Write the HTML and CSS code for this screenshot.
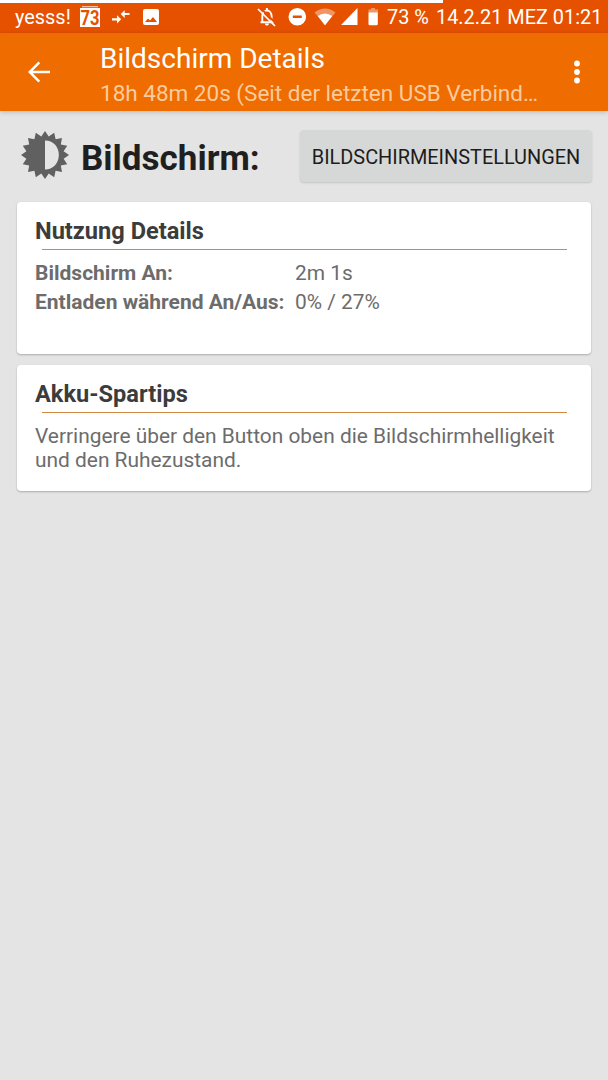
FILE: index.html
```html
<!DOCTYPE html>
<html lang="de">
  <head>
    <meta charset="UTF-8">
    <meta name="viewport" content="width=device-width,initial-scale=1">
    <link rel="stylesheet" href="styles.css">
    <title>Bildschirm Details</title>
  </head>
  <body>
    <div class="progress"></div>
    <div class="status-bar">
      <span class="carrier">yesss!</span>
      <svg class="status-left" width="90" height="30" viewBox="76 3 90 30" fill="#fff">
        <path d="M82 6h16v1.300H82z" opacity=".65"/>
        <path d="M80 8h20v19H80z"/>
        <text class="badge-text" x="90" y="24.500" text-anchor="middle" textLength="19" lengthAdjust="spacingAndGlyphs">73</text>
        <path d="M112 18.200h5v-3l4.200 4.100-4.200 4.100v-3h-5zM129.500 13h-4.800v-2.800L120.700 14l4 3.900V15h4.800z"/>
        <path fill-rule="evenodd" d="M145 9h12q2 0 2 2v12q0 2-2 2h-12q-2 0-2-2V11q0-2 2-2zM145 22h12l-4-5-3 3.500-2-2z"/>
      </svg>
      <svg class="status-right" width="124" height="30" viewBox="256 3 124 30" fill="#fff">
        <path fill="none" stroke="#fff" stroke-width="1.900" d="M260.500 22.300h13.200M262.300 22v-5.500c0-8 9.300-8 9.300 0V22M266.900 10.500V8"/>
        <path d="M264.900 23.500h4c0 2.800-4 2.800-4 0z"/>
        <path fill="none" stroke="#e65100" stroke-width="1.800" d="M260 7.500l16 16"/>
        <path fill="none" stroke="#fff" stroke-width="1.700" d="M258 9l17 17"/>
        <path fill-rule="evenodd" d="M297.300 8a8.800 8.800 0 1 1 0 17.600 8.800 8.800 0 1 1 0-17.600zM292.800 15.600v2.400h9v-2.400z"/>
        <path opacity=".4" d="M314.500 12.600q10.500-8 21 0L325 25.300z"/>
        <path d="M317.800 16q7.200-5.200 14.400 0L325 25.300z"/>
        <path d="M357.500 8v17H341z"/>
        <path opacity=".4" d="M371 8h4v1.500h3V13h-9.500V9.500h2.500z"/>
        <path d="M368.500 12.500h9.300V24q0 1.300-1.300 1.300h-6.700q-1.300 0-1.300-1.300z"/>
      </svg>
      <span class="battery">73 %</span>
      <span class="clock">14.2.21 MEZ 01:21</span>
    </div>
    <div class="toolbar">
      <svg class="back" width="24" height="24" viewBox="0 0 24 24" fill="none" stroke="#fff" stroke-width="2.500">
        <path d="M12.300 2.300L2.800 12l9.500 9.700M3 12h20"/>
      </svg>
      <div class="titles">
        <div class="title">Bildschirm Details</div>
        <div class="subtitle">18h 48m 20s (Seit der letzten USB Verbind…</div>
      </div>
      <svg class="more" width="8" height="24" viewBox="0 0 8 24" fill="#fff">
        <circle cx="4" cy="3.500" r="2.900"/>
        <circle cx="4" cy="12" r="2.900"/>
        <circle cx="4" cy="20.500" r="2.900"/>
      </svg>
    </div>
    <div class="content">
      <div class="heading">
        <svg class="sun" width="50" height="50" viewBox="-25 -25 50 50">
          <path fill="#606060" fill-rule="evenodd" d="M0-24L3.700-18.600 9.200-22.200 10.600-15.800 17-17 15.800-10.600 22.200-9.200 18.600-3.700 24 0 18.600 3.700 22.200 9.200 15.800 10.600 17 17 10.600 15.800 9.200 22.200 3.700 18.600 0 24-3.700 18.600-9.200 22.200-10.600 15.800-17 17-15.800 10.600-22.200 9.200-18.600 3.700-24 0-18.600-3.700-22.200-9.200-15.800-10.600-17-17-10.600-15.800-9.200-22.200-3.700-18.600zM0-14.500V14.500C18.500 14.500 18.500-14.500 0-14.500z"/>
        </svg>
        <h1>Bildschirm:</h1>
        <button class="settings">BILDSCHIRMEINSTELLUNGEN</button>
      </div>
      <div class="card usage">
        <h2>Nutzung Details</h2>
        <div class="row"><b>Bildschirm An:</b><span>2m 1s</span></div>
        <div class="row"><b>Entladen während An/Aus:</b><span>0% / 27%</span></div>
      </div>
      <div class="card tips">
        <h2>Akku-Spartips</h2>
        <p>Verringere über den Button oben die Bildschirmhelligkeit<br>und den Ruhezustand.</p>
      </div>
    </div>
  </body>
</html>
```
FILE: styles.css
```css
* {
  box-sizing: border-box;
}

body {
  margin: 0;
  height: 1080px;
  overflow: hidden;
  background: #e4e4e4;
  font-family: Roboto, sans-serif;
  white-space: nowrap;
}

.progress {
  height: 3px;
  background: linear-gradient(#fff, #fff) 0 0 / 443px 3px no-repeat #e65100;
}

.status-bar {
  display: flex;
  height: 30px;
  padding-left: 15px;
  background: #e65100;
  color: #fff;
  font-size: 19.9px;
  line-height: 29px;
}

.status-bar svg {
  flex: none;
}

.carrier {
  width: 61px;
}

.badge-text {
  fill: #e65100;
  font-size: 20px;
  font-weight: 700;
}

.status-right {
  margin-left: 90px;
}

.battery {
  width: 49px;
  margin-left: 7px;
}

.toolbar {
  display: flex;
  align-items: center;
  position: relative;
  height: 78px;
  padding: 0 27px;
  background: #ef6c00;
  color: #fff;
  box-shadow: 0 1px 5px rgba(0, 0, 0, .2);
}

.titles {
  flex: 1;
  margin-left: 49px;
  padding-top: 8px;
}

.title {
  font-size: 28px;
  line-height: 34px;
}

.subtitle {
  color: #fbcb9d;
  font-size: 22.5px;
  line-height: 34px;
}

.content {
  padding: 19px 17px 0 17px;
}

.heading {
  display: flex;
  height: 52px;
  margin: 0 -1px 20px 0;
}

.sun {
  margin-left: 3px;
}

h1 {
  flex: 1;
  margin: 0 0 0 11px;
  color: #1f1f1f;
  font-size: 35px;
  line-height: 57px;
}

.settings {
  width: 292px;
  height: 52px;
  padding: 2px 0 0;
  border: 0;
  border-radius: 4px;
  background: #d6d8d7;
  box-shadow: 0 1px 2px rgba(0, 0, 0, .15);
  color: #1c1c1c;
  font-family: inherit;
  font-size: 19.9px;
}

.card {
  margin-bottom: 11px;
  padding: 10px 18px;
  border-radius: 4px;
  background: #fff;
  box-shadow: 0 1px 2px rgba(0, 0, 0, .25);
  color: #6c6c6c;
  font-size: 20.9px;
}

.usage {
  height: 152px;
}

.tips {
  height: 126px;
}

h2 {
  height: 38px;
  margin: 0 0 9px;
  background: linear-gradient(#d08a44, #d08a44) 7px 37px / 525px 1px no-repeat;
  color: #3c3c3c;
  font-size: 23.6px;
  line-height: 38px;
}

.row {
  display: flex;
  line-height: 29px;
}

.row b {
  width: 260px;
  font-size: 21px;
}

p {
  margin: 11px 0 0;
  line-height: 24px;
}
```
